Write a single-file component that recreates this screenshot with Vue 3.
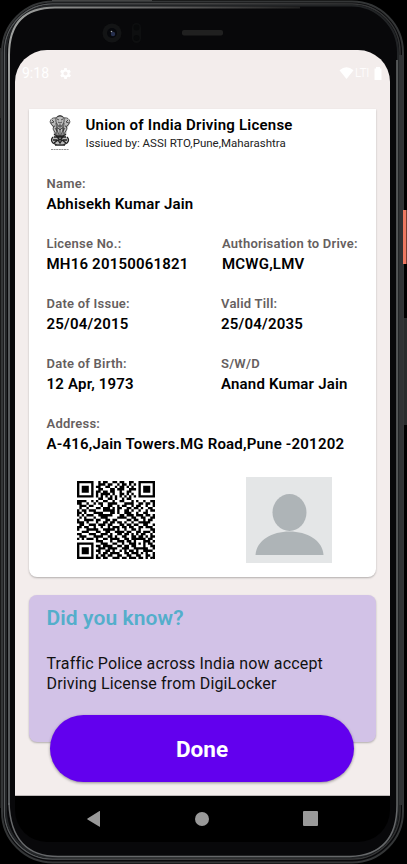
<script setup>
const code = [
  '111111100101100110110011001111111',
  '100000100111011001011010101000001',
  '101110101100110010110101001011101',
  '101110100110001101110011101011101',
  '101110101101101100100110001011101',
  '100000101011110100110101001000001',
  '111111101010101010101010101111111',
  '000000000110011010010110000000000',
  '111100101001100100110001010010011',
  '110010010110011110001111001101101',
  '011101100010011001011001011001001',
  '010010001101110101100110110100110',
  '101101110001111101001101001001011',
  '110100011110001101001110010011000',
  '101011100111111000110111011101101',
  '010100010011100001111001100110011',
  '100111101100110110000110110010110',
  '111010001001101101101001001111100',
  '011001110111011000110110110011001',
  '110110010010010111011011001101110',
  '100011111001111101001001101000011',
  '001110001100110011110110011011101',
  '110001110011101001101101010110010',
  '011100011110011010011001101101011',
  '101011101001101111001101111110110',
  '000000001110001001110110100011101',
  '111111100011100110010011101010110',
  '100000101101111001101101100010011',
  '101110100111011110011100111111001',
  '101110101100110100101011010011110',
  '101110100101101111001101110101001',
  '100000101011011001100110011001101',
  '111111101101100111011011101101011',
]
const modules = code
  .map((row, y) => [...row].map((c, x) => (c === '1' ? `M${x} ${y}h1v1h-1z` : '')).join(''))
  .join('')

const rows = [
  [{ label: 'Name:', value: 'Abhisekh Kumar Jain' }],
  [{ label: 'License No.:', value: 'MH16 20150061821' }, { label: 'Authorisation to Drive:', value: 'MCWG,LMV' }],
  [{ label: 'Date of Issue:', value: '25/04/2015' }, { label: 'Valid Till:', value: '25/04/2035' }],
  [{ label: 'Date of Birth:', value: '12 Apr, 1973' }, { label: 'S/W/D', value: 'Anand Kumar Jain' }],
  [{ label: 'Address:', value: 'A-416,Jain Towers.MG Road,Pune -201202' }],
]
</script>

<template>
  <div class="phone">
    <svg class="frame" width="407" height="864" viewBox="0 0 407 864" fill="none">
      <defs>
        <linearGradient id="rim" x1="0" y1="0" x2="1" y2="0">
          <stop offset="0" stop-color="#56595b" />
          <stop offset=".5" stop-color="#555" />
          <stop offset="1" stop-color="#303132" />
        </linearGradient>
        <linearGradient id="shine" gradientUnits="userSpaceOnUse" x1="9" y1="0" x2="300" y2="0">
          <stop offset="0" stop-color="#a0a2a0" />
          <stop offset=".5" stop-color="#666" />
          <stop offset="1" stop-color="#222" />
        </linearGradient>
        <linearGradient id="side" gradientUnits="userSpaceOnUse" x1="0" y1="55" x2="0" y2="250">
          <stop offset="0" stop-color="#a0a2a0" />
          <stop offset="1" stop-color="#55585a" />
        </linearGradient>
      </defs>
      <path d="M0 48v70M52 .5h100" stroke="#555" />
      <path d="M0 118v690" stroke="#333" />
      <path d="M404.500 210v54" stroke="#ef7862" stroke-width="4" />
      <path d="M405 318v107" stroke="#292b2c" stroke-width="4" />
      <rect x="2" y="1.5" width="401" height="861" rx="51" fill="#08080a" stroke="#343637" stroke-width="2" />
      <rect x="4.5" y="4" width="395.5" height="855" rx="48" stroke="url(#rim)" stroke-width="1.5" />
      <rect x="6" y="5.5" width="392" height="852" rx="47" stroke="#222426" stroke-width="2" />
      <path d="M9 55Q9 7.500 55 7.500H300" stroke="url(#shine)" stroke-width="2" />
      <path d="M8 55h2V805h-2z" fill="url(#side)" />
      <path d="M9 803Q11 856.500 58 856.500H350Q397 855 397 805V60" stroke="#66686a" stroke-width="1.500" />
      <path d="M401 55V805" stroke="#303234" stroke-width="4" />
      <path d="M403 210h3v54h-3z" fill="#ef7862" />
      <circle cx="112" cy="33" r="9.5" fill="#131415" />
      <circle cx="112" cy="33" r="5" fill="#07080c" />
      <circle cx="113" cy="34" r="2.2" fill="#27304e" />
      <circle cx="111.5" cy="31.5" r=".8" fill="#a4a8ad" />
      <rect x="132" y="23" width="9" height="20" rx="4.5" fill="#0e0f10" />
      <circle cx="136.5" cy="27.5" r="3" fill="#08090a" />
      <circle cx="136.5" cy="38" r="3" fill="#08090a" />
      <rect x="182" y="30" width="41" height="5.5" rx="2" fill="#202020" />
    </svg>

    <main class="screen">
      <header class="status">
        <span class="time">9:18</span>
        <svg class="gear" width="15" height="15" viewBox="1 0 24 24"><path fill="#fff" fill-rule="evenodd" d="M19.4 13a7.5 7.5 0 0 0 0-2l2.1-1.6-2-3.5-2.5 1a7 7 0 0 0-1.7-1L15 3.2h-4l-.4 2.700a7 7 0 0 0-1.700 1l-2.500-1-2 3.500L6.600 11a7.500 7.500 0 0 0 0 2l-2.100 1.600 2 3.500 2.500-1a7 7 0 0 0 1.700 1l.4 2.700h4l.4-2.700a7 7 0 0 0 1.700-1l2.500 1 2-3.500zM13 15.300a3.300 3.300 0 1 1 0-6.600 3.300 3.300 0 0 1 0 6.600z" /></svg>
        <svg class="wifi" width="15" height="12" viewBox="0 0 15 12"><path fill="#fff" d="M.5 3.200Q7.500-2.500 14.500 3.200L7.500 12z" /></svg>
        <span class="lte">LTI</span>
        <svg width="8" height="13" viewBox="0 0 8 13"><path fill="#fff" d="M2 1.500V0h4v1.500h1.500V13h-7V1.500z" /></svg>
      </header>

      <section class="card">
        <div class="head">
          <svg class="emblem" width="22" height="37" viewBox="0 0 22 37" fill="none" stroke="#333" stroke-width=".8">
            <path fill="#bbb" stroke="none" d="M7 2q4-3 8 0l4 2 2 4-3 6-1 7 2 4-3 4H6l-3-4 2-5-1-7-3-5 2-4z" />
            <path d="M7 7q-1-6 4-6.500Q16 1 15 7l-2 4H9zM8 4l2 1m2 0 2-1M9 7q2 2 4 0M8 2l3-1 3 1M7 3Q2 2 1 7l2 3q1 2 3 1M15 3q5-1 6 4l-2 3q-1 2-3 1M3 5l2 2-3 1M19 5l-2 2 3 1M5 11l-1 3 3 5M17 11l1 3-3 5M7 8l1 12M15 8l-1 12M9 11l-1 4 2 5M13 11l1 4-2 5M11 9v12M9 13l2 2 2-2M6 13l2 3M16 13l-2 3" />
            <path stroke="#222" stroke-width="1.300" d="M5 19l3 2h6l3-2M4 22q-3 3 0 6l4 2h6l4-2q3-3 0-6M5 22h12M5 28l4-3 2 3 2-3 4 3M4 25h4m6 0h4M8 22l3 3 3-3M6 30h10" />
            <path stroke="#777" stroke-dasharray="2 .6" d="M2 34.500h18" />
          </svg>
          <div>
            <h1>Union of India Driving License</h1>
            <p>Issiued by: ASSI RTO,Pune,Maharashtra</p>
          </div>
        </div>

        <dl v-for="(row, i) in rows" :key="i" class="row" :class="{ inset: i > 1 }">
          <div v-for="f in row" :key="f.label">
            <dt>{{ f.label }}</dt>
            <dd>{{ f.value }}</dd>
          </div>
        </dl>

        <div class="pictures">
          <svg class="qr" width="78" height="78" viewBox="0 0 33 33"><path :d="modules" /></svg>
          <svg width="86" height="86" viewBox="0 0 86 86">
            <path fill="#e4e6e7" d="M0 0h86v86H0z" />
            <ellipse cx="43.500" cy="35.500" rx="17" ry="18.500" fill="#aeb4b7" />
            <path fill="#aeb4b7" d="M9.500 78C10.500 63 26 54.500 43.500 54.500S76.500 63 77.500 78z" />
          </svg>
        </div>
      </section>

      <section class="tip">
        <h2>Did you know?</h2>
        <p>Traffic Police across India now accept<br />Driving License from DigiLocker</p>
      </section>
      <button class="done">Done</button>
    </main>

    <nav class="nav">
      <svg width="14" height="16" viewBox="0 0 14 16"><path fill="#999" d="M13 .3v15.200q0 .5-.5.2L.5 8.500q-.6-.5 0-1L12.500.1q.5-.3.500.2z" /></svg>
      <svg width="14" height="14" viewBox="0 0 14 14"><circle cx="7" cy="7" r="7" fill="#999" /></svg>
      <svg width="15" height="15" viewBox="0 0 15 15"><rect width="15" height="15" rx="1" fill="#999" /></svg>
    </nav>
  </div>
</template>

<style>
body { margin: 0; background: #000; }
</style>

<style scoped>
* { box-sizing: border-box; }
.phone { position: relative; width: 407px; height: 864px; padding: 50px 20px 22px 15px; background: #000; overflow: hidden; font-family: Roboto, sans-serif; display: flex; flex-direction: column; }
.frame { position: absolute; left: 0; top: 0; }
.screen { position: relative; width: 375px; height: 746px; flex: none; background: #f3edec; border-radius: 32px 32px 0 0; overflow: hidden; padding: 0 14px; border-bottom: 1px solid #bdb8b8; }
.status { height: 59px; display: flex; align-items: center; margin: 0 -14px; padding: 0 8px 13px 7px; color: #fff; font-size: 14px; }
.time { width: 36px; }
.wifi { margin-left: auto; }
.lte { width: 15px; margin: 0 4px 0 1px; font-size: 12px; font-weight: 300; letter-spacing: -.3px; }
.card { width: 347px; height: 468px; background: #fff; border-radius: 0 0 8px 8px; box-shadow: 0 1px 2px #0004; padding: 6px 17px 0 17.500px; }
h1, h2, p, dl, dd { margin: 0; }
.head { display: flex; height: 60px; }
.emblem { margin: 0 15px 0 2px; }
h1 { font-size: 15px; line-height: 21px; font-weight: 600; letter-spacing: .23px; color: #000; white-space: nowrap; }
.head p { font-size: 11.500px; line-height: 15px; color: #222; }
.row { display: grid; grid-template-columns: 175.500px 1fr; height: 60px; white-space: nowrap; }
.row.inset { grid-template-columns: 174.500px 1fr; }
dt { font-size: 13px; line-height: 18px; font-weight: 600; letter-spacing: .23px; color: #665f5f; }
dd { font-size: 15px; line-height: 22px; font-weight: 600; letter-spacing: .2px; color: #000; }
.pictures { display: flex; align-items: center; justify-content: space-between; padding: 2px 27px 0 30px; }
.tip { width: 347px; height: 147px; margin-top: 18px; padding: 10px 17px 10px 17.500px; border-radius: 8px; background: #d2c2e7; box-shadow: 0 1px 2px #0004; }
h2 { font-size: 21px; line-height: 26px; font-weight: 600; letter-spacing: .1px; color: #54aecb; }
.tip p { margin-top: 23px; font-size: 16px; line-height: 19.500px; letter-spacing: .15px; color: #111; white-space: nowrap; }
.done { position: relative; display: block; width: 304px; height: 67px; margin: -27px 0 0 21px; padding: 1px 0 0; border: 0; border-radius: 34px; background: #6200ee; color: #fff; box-shadow: 0 1px 3px #0006; font: 700 22.500px Roboto, sans-serif; }
.nav { position: relative; width: 375px; height: 46px; background: #000; border-radius: 0 0 32px 32px; display: flex; align-items: center; justify-content: space-between; padding: 0 72px 1px 72px; }
</style>
